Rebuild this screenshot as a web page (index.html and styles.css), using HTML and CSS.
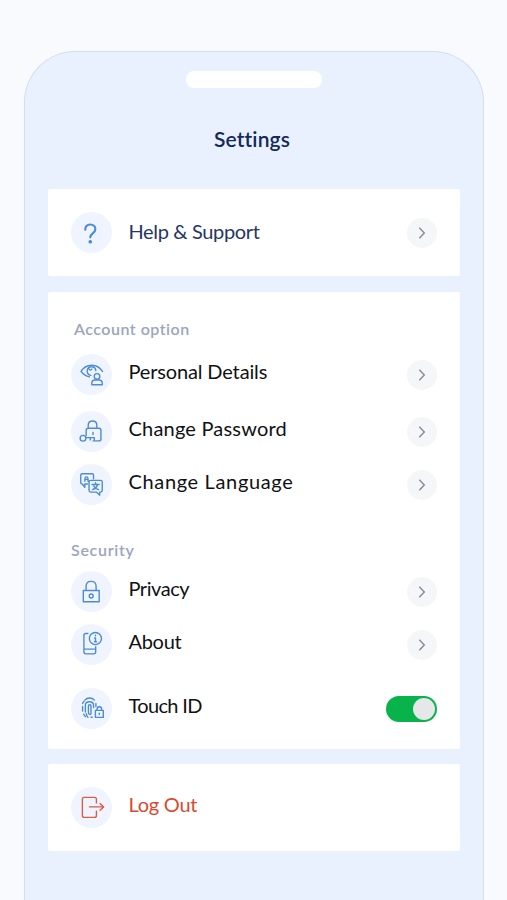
FILE: index.html
```html
<!DOCTYPE html>
<html lang="en">
<head>
<meta charset="utf-8">
<meta name="viewport" content="width=device-width, initial-scale=1">
<title>Settings</title>
<link rel="stylesheet" href="styles.css">
</head>
<body>
<svg class="defs" aria-hidden="true"><symbol id="chevron" viewBox="0 0 30 30"><path d="M12.300 9.700l5 5.300-5 5.300"/></symbol></svg>
<main class="phone">
  <div class="speaker"></div>
  <h1 class="title">Settings</h1>

  <section class="card single">
    <div class="row help">
      <span class="icon"><svg viewBox="0 0 40 40"><path stroke-width="2.1" d="M13.900 17.200c0-3.200 2-5 4.800-5 3 0 5.100 1.800 5.100 4.500 0 4.300-5 3.900-5 8"/><circle class="solid" cx="18.800" cy="29" r="1.800"/></svg></span>
      <span class="label">Help &amp; Support</span>
      <svg class="chevron"><use href="#chevron"/></svg>
    </div>
  </section>

  <section class="card options">
    <h2 class="heading account">Account option</h2>
    <div class="row personal">
      <span class="icon"><svg viewBox="0 0 40 40"><path d="M18 22.300c-3.800-.8-6.500-2.900-8.300-5.300 2.500-3.800 6-6 10.500-6s8 2.200 10.500 6M24.200 16.200a4.200 4.200 0 1 0-4.800 4.600M17.600 14.500c.4 1.500 2.200 1.500 2.800.2"/><circle cx="25.400" cy="21.900" r="2.700"/><path d="M20.300 30v-1.200c0-2 1.300-3.400 3.200-3.400h3.800c1.900 0 3.200 1.400 3.200 3.400V30z"/></svg></span>
      <span class="label">Personal Details</span>
      <svg class="chevron"><use href="#chevron"/></svg>
    </div>
    <div class="row password">
      <span class="icon"><svg viewBox="0 0 40 40"><path d="M14.800 24v-5.200c0-1.300.7-2 2-2h10.400c1.300 0 2 .7 2 2v8.400c0 1.300-.7 2-2 2h-5.700M16.800 16.500V14c0-2.700 1.500-4.300 4.100-4.300s4.300 1.600 4.300 4.300v2.500M21.500 21v2"/><circle cx="11.700" cy="26.600" r="2.800"/><path d="M14.500 26h8.200v2.300M18.800 26v2.200"/></svg></span>
      <span class="label">Change Password</span>
      <svg class="chevron"><use href="#chevron"/></svg>
    </div>
    <div class="row language">
      <span class="icon"><svg viewBox="0 0 40 40"><path d="M16 19.500h-2.500v3.200l-2.500-3.200c-1 0-1.500-.6-1.500-1.500v-7c0-1 .6-1.500 1.500-1.500h9.500c1 0 1.500.6 1.500 1.500v3.500M13.600 16.800v-2.500c0-2.300 3-2.300 3 0v2.500M13.600 15h3M19.300 16h9.500c1.100 0 1.700.6 1.700 1.700v8c0 1.100-.6 1.700-1.700 1.700H28v3l-3.300-3h-5.400c-1.100 0-1.700-.6-1.700-1.700v-8c0-1.100.6-1.700 1.700-1.700zM20.500 20h7M24 18.300V20M21 25c2.600-.8 4.300-2.300 4.800-5M22.200 21.500c1 1.700 2.500 2.900 4.700 3.500"/></svg></span>
      <span class="label">Change Language</span>
      <svg class="chevron"><use href="#chevron"/></svg>
    </div>
    <h2 class="heading security">Security</h2>
    <div class="row privacy">
      <span class="icon"><svg viewBox="0 0 40 40"><path d="M12 19h15.500v11H12zM14.700 19v-4c0-2.900 1.800-4.900 4.900-4.900s4.900 2 4.900 4.900v4"/><circle cx="19.700" cy="24.400" r="1.900"/></svg></span>
      <span class="label">Privacy</span>
      <svg class="chevron"><use href="#chevron"/></svg>
    </div>
    <div class="row about">
      <span class="icon"><svg viewBox="0 0 40 40"><path d="M16.500 9.300h-1.900c-1.300 0-2 .7-2 2v15.800c0 1.300.7 2 2 2h7.500c1.300 0 2-.7 2-2v-5M12.600 24.500h11.500"/><circle cx="23.800" cy="14.200" r="5.900"/><path d="M23.900 13.600v3.700M23.100 13.600h.8M22.900 17.300h2M23.900 10.900v.5"/></svg></span>
      <span class="label">About</span>
      <svg class="chevron"><use href="#chevron"/></svg>
    </div>
    <div class="row touch">
      <span class="icon"><svg viewBox="0 0 40 40"><path d="M13.500 11.800c2.500-2.800 7-2.800 9.300 0M11.300 15.200c.4-1 .8-1.700 1.300-2.300M11.300 18v4.500M12.300 25.500l1.700 2.500M14 23.500V17c0-4.800 8-4.800 8 0v2M16.500 28.500c-1-1-1.500-2-1.500-3.500M17 24v-6.500c0-1.600 2.500-1.600 2.500 0v7.300c0 1.400-2.500 1.400-2.500-.8M19.500 28.500h1.200M24.300 15v3"/><path d="M23.800 21.800h7.700v6.900h-7.700zM25.400 21.800v-1.200c0-3 4.500-3 4.500 0v1.200M27.600 24.600v1.300"/></svg></span>
      <span class="label">Touch ID</span>
      <span class="toggle" role="switch" aria-checked="true"></span>
    </div>
  </section>

  <section class="card single">
    <div class="row logout">
      <span class="icon"><svg viewBox="0 0 40 40"><path d="M24.800 15.500V12c0-1.300-.6-1.900-1.900-1.900H13c-1.300 0-1.900.6-1.900 1.900v15.700c0 1.300.6 1.900 1.900 1.900h9.900c1.300 0 1.900-.6 1.900-1.900v-4.200M18 19.400h13.400M28.400 16.100l3.500 3.300-3.500 3.300"/></svg></span>
      <span class="label">Log Out</span>
    </div>
  </section>
</main>
</body>
</html>
```

FILE: styles.css
```css
* { box-sizing: border-box; }
body {
  margin: 0;
  height: 900px;
  padding: 51px 23px 0 24px;
  background: #f8fafe;
  font-family: Lato, "Liberation Sans", sans-serif;
  font-variant-ligatures: none;
  color: #101115;
}
.defs { display: none; }
.phone {
  height: 849px;
  padding: 19px 23px 0;
  border: 1px solid #d5deed;
  border-bottom: 0;
  border-radius: 51px 51px 0 0;
  background: #e9f1ff;
}
.speaker {
  width: 136px;
  height: 17px;
  margin: 0 auto;
  border-radius: 8px;
  background: #fff;
}
.title {
  margin: 36px 4px 0 0;
  height: 30px;
  line-height: 30px;
  text-align: center;
  font-size: 21px;
  font-weight: 600;
  letter-spacing: .15px;
  color: #15295b;
}
.card {
  background: #fff;
  border-radius: 2px;
  padding: 0 23px;
}
.single {
  height: 87px;
  padding-top: 23px;
}
.title + .card { margin-top: 35px; }
.options {
  height: 457px;
  margin: 16px 0 15px;
  padding-top: 27px;
}
.row {
  height: 41px;
  display: flex;
  align-items: center;
}
.icon {
  width: 41px;
  height: 41px;
  flex: none;
  border-radius: 50%;
  background: #eff4ff;
}
.icon svg {
  display: block;
  width: 41px;
  height: 41px;
  fill: none;
  stroke: #4b8bd7;
  stroke-width: 1.35;
  stroke-linecap: round;
  stroke-linejoin: round;
}
.icon .solid { fill: #4b8bd7; stroke: none; }
.label {
  flex: 1;
  margin-left: 16.5px;
  padding-bottom: 7px;
  font-size: 20px;
  line-height: 26px;
  white-space: nowrap;
}
.chevron {
  width: 30px;
  height: 30px;
  flex: none;
  border-radius: 50%;
  background: #f4f6f8;
  fill: none;
  stroke: #858b9b;
  stroke-width: 1.4;
}
.toggle {
  width: 51px;
  height: 26px;
  padding: 2px;
  display: flex;
  justify-content: flex-end;
  border-radius: 13px;
  background: #08b34b;
}
.toggle::after {
  content: "";
  width: 22px;
  height: 22px;
  border-radius: 50%;
  background: #e5e7e9;
}
.heading {
  margin: 0;
  height: 20px;
  line-height: 20px;
  font-size: 16px;
  font-weight: 600;
  color: #9ba5bd;
}
.account { padding-left: 3px; margin-bottom: 15px; letter-spacing: .5px; }
.password { margin-top: 16px; }
.language { margin-top: 12px; }
.security { margin: 35px 0 11px; letter-spacing: .7px; }
.about { margin-top: 12px; }
.touch { margin-top: 23px; }
.help .label { padding-bottom: 4px; letter-spacing: -.35px; color: #263565; }
.personal .label { letter-spacing: -.15px; }
.password .label { letter-spacing: .2px; }
.language .label { letter-spacing: .65px; }
.privacy .label { letter-spacing: -.45px; }
.about .label { letter-spacing: -.3px; }
.touch .label { letter-spacing: -.65px; }
.logout .label { letter-spacing: -.25px; color: #d84a2d; }
.logout .icon svg { stroke: #dd5c43; }
```
